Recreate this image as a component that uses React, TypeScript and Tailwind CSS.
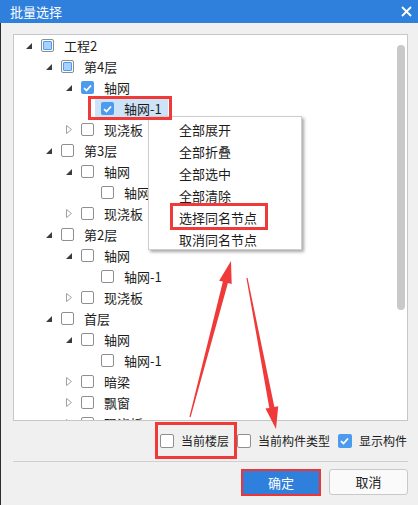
import React from 'react';

type CheckState = 'none' | 'partial' | 'checked';

interface TreeRow {
  level: number;
  label: string;
  arrow: 'open' | 'closed' | 'none';
  check: CheckState;
  selected?: boolean;
}

const rows: TreeRow[] = [
  { level: 0, label: '工程2', arrow: 'open', check: 'partial' },
  { level: 1, label: '第4层', arrow: 'open', check: 'partial' },
  { level: 2, label: '轴网', arrow: 'open', check: 'checked' },
  { level: 3, label: '轴网-1', arrow: 'none', check: 'checked', selected: true },
  { level: 2, label: '现浇板', arrow: 'closed', check: 'none' },
  { level: 1, label: '第3层', arrow: 'open', check: 'none' },
  { level: 2, label: '轴网', arrow: 'open', check: 'none' },
  { level: 3, label: '轴网-1', arrow: 'none', check: 'none' },
  { level: 2, label: '现浇板', arrow: 'closed', check: 'none' },
  { level: 1, label: '第2层', arrow: 'open', check: 'none' },
  { level: 2, label: '轴网', arrow: 'open', check: 'none' },
  { level: 3, label: '轴网-1', arrow: 'none', check: 'none' },
  { level: 2, label: '现浇板', arrow: 'closed', check: 'none' },
  { level: 1, label: '首层', arrow: 'open', check: 'none' },
  { level: 2, label: '轴网', arrow: 'open', check: 'none' },
  { level: 3, label: '轴网-1', arrow: 'none', check: 'none' },
  { level: 2, label: '暗梁', arrow: 'closed', check: 'none' },
  { level: 2, label: '飘窗', arrow: 'closed', check: 'none' },
  { level: 2, label: '现浇板', arrow: 'closed', check: 'none' },
];

const indent = ['pl-[12px]', 'pl-[32px]', 'pl-[52px]', 'pl-[72px]'];

const menuItems = ['全部展开', '全部折叠', '全部选中', '全部清除', '选择同名节点', '取消同名节点'];

function Check({ state, size = 'sm' }: { state: CheckState; size?: 'sm' | 'md' }) {
  const box = size === 'sm' ? 'w-[13px] h-[13px]' : 'w-[14px] h-[14px]';
  if (state === 'checked') {
    return (
      <span className={`${box} shrink-0 rounded-[2px] bg-[#4c9bef] flex items-center justify-center`}>
        <svg width="9" height="8" viewBox="0 0 9 8">
          <path d="M1 4.2 L3.5 6.5 L8 1.5" stroke="#fff" strokeWidth="1.8" fill="none" />
        </svg>
      </span>
    );
  }
  if (state === 'partial') {
    return (
      <span className={`${box} shrink-0 rounded-[2px] border border-[#8c8c8c] bg-white flex items-center justify-center`}>
        <span className="w-[9px] h-[9px] rounded-[1px] border border-[#4a9cf3] bg-[#a9d1ff]" />
      </span>
    );
  }
  return <span className={`${box} shrink-0 rounded-[2px] border border-[#8f8f8f] bg-white`} />;
}

function Arrow({ kind }: { kind: TreeRow['arrow'] }) {
  if (kind === 'open') {
    return (
      <svg width="6" height="6" viewBox="0 0 6 6" className="shrink-0 mr-[9px] mt-[1px]">
        <polygon points="6,0 6,6 0,6" fill="#3c3c3c" />
      </svg>
    );
  }
  if (kind === 'closed') {
    return (
      <svg width="6" height="9" viewBox="0 0 6 9" className="shrink-0 mr-[9px]">
        <polygon points="0.5,0.5 5.5,4.5 0.5,8.5" fill="none" stroke="#a0a0a0" strokeWidth="1" />
      </svg>
    );
  }
  return <span className="w-[6px] shrink-0 mr-[9px]" />;
}

// red annotation arrow: thin tail widening towards the head
function arrowPoints(x1: number, y1: number, x2: number, y2: number) {
  const len = Math.hypot(x2 - x1, y2 - y1);
  const dx = (x2 - x1) / len;
  const dy = (y2 - y1) / len;
  const nx = -dy;
  const ny = dx;
  const hb = { x: x2 - dx * 22, y: y2 - dy * 22 };
  const p = (x: number, y: number, w: number) => `${x + nx * w},${y + ny * w}`;
  return [
    p(x1, y1, 0.6),
    p(hb.x, hb.y, 2.6),
    p(hb.x, hb.y, 6.5),
    `${x2},${y2}`,
    p(hb.x, hb.y, -6.5),
    p(hb.x, hb.y, -2.6),
    p(x1, y1, -0.6),
  ].join(' ');
}

export default function App() {
  return (
    <div className="w-[418px] h-[505px] relative overflow-hidden bg-[#f0f0f0] text-[#1c1c1c] font-['Noto_Sans_CJK_SC',sans-serif]">
      <div className="h-[23px] bg-[#2f7fdc] flex items-center justify-between pl-[10px] pr-[6px] text-white">
        <span className="text-[13px] leading-none">批量选择</span>
        <svg width="11" height="11" viewBox="0 0 11 11">
          <path d="M1 1 L10 10 M10 1 L1 10" stroke="#fff" strokeWidth="1.8" />
        </svg>
      </div>

      <div className="h-[482px] border-l border-[#2e2e2e] pl-[12px] pr-[10px] flex flex-col">
        <div className="mt-[11px] h-[387px] bg-white border border-[#c6c6cc] relative overflow-hidden">
          {rows.map((r, i) => (
            <div key={i} className={`h-[21px] flex items-center text-[13px] ${indent[r.level]}`}>
              <Arrow kind={r.arrow} />
              {r.selected ? (
                <span className="-ml-[6px] h-[22px] flex items-center bg-[#cde3f8] px-[6px]">
                  <Check state={r.check} />
                  <span className="ml-[10px] leading-none">{r.label}</span>
                </span>
              ) : (
                <>
                  <Check state={r.check} />
                  <span className="ml-[10px] leading-none">{r.label}</span>
                </>
              )}
            </div>
          ))}
          <div className="absolute right-[2px] top-[10px] w-[8px] h-[265px] rounded-full bg-[#c9c9c9]" />
        </div>

        <div className="h-[40px] flex items-center justify-end gap-[8px] text-[12px] pr-[1px]">
          <label className="flex items-center gap-[7px]">
            <Check state="none" size="md" />
            <span>当前楼层</span>
          </label>
          <label className="flex items-center gap-[7px]">
            <Check state="none" size="md" />
            <span>当前构件类型</span>
          </label>
          <label className="flex items-center gap-[7px]">
            <Check state="checked" size="md" />
            <span>显示构件</span>
          </label>
        </div>

        <div className="border-t border-[#cfcfcf]" />

        <div className="pt-[7px] flex justify-end gap-[8px] text-[13px]">
          <button className="w-[80px] h-[27px] bg-[#2f7fdd] text-white border-2 border-[#ee3434]">确定</button>
          <button className="w-[79px] h-[26px] bg-[#fafafa] border border-[#c9c9c9] rounded-[3px]">取消</button>
        </div>
      </div>

      {/* context menu */}
      <div className="absolute left-[148px] top-[116px] w-[154px] h-[134px] bg-white border border-[#cfcfcf] shadow-[2px_2px_3px_rgba(0,0,0,0.35)] pt-[1px] text-[13px]">
        {menuItems.map((m) => (
          <div key={m} className="h-[22px] flex items-center pl-[30px] leading-none">
            {m}
          </div>
        ))}
      </div>

      {/* red annotations */}
      <div className="absolute left-[88px] top-[96px] w-[84px] h-[24px] border-[3px] border-[#f03a3a]" />
      <div className="absolute left-[170px] top-[203px] w-[98px] h-[27px] border-[3px] border-[#f03a3a]" />
      <div className="absolute left-[155px] top-[422px] w-[82px] h-[37px] border-[3px] border-[#f03a3a]" />
      <svg className="absolute inset-0 pointer-events-none" width="418" height="505">
        <polygon points={arrowPoints(190, 417, 231, 261)} fill="#f03a3a" />
        <polygon points={arrowPoints(247, 278, 276, 429)} fill="#f03a3a" />
      </svg>
    </div>
  );
}
